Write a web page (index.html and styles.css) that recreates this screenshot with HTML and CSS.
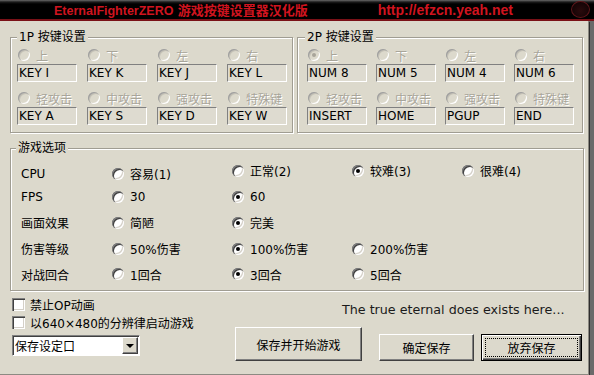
FILE: index.html
```html
<!DOCTYPE html>
<html lang="zh-CN">
<head>
  <meta charset="UTF-8">
  <title>EternalFighterZERO 游戏按键设置器汉化版</title>
  <link rel="stylesheet" href="styles.css">
</head>
<body>
  <div class="window">
    <div class="titlebar">
      <span class="title"><span class="latin">EternalFighterZERO</span> <span class="cjk">游戏按键设置器汉化版</span></span>
      <span class="url">http://efzcn.yeah.net</span>
      <span class="close"></span>
    </div>

    <div class="content">
      <div class="keys">
        <fieldset class="group p1">
          <legend>1P 按键设置</legend>
          <div class="keyrow">
            <div class="cell"><label class="key"><span class="radio"></span>上</label><div class="box">KEY I</div></div>
            <div class="cell"><label class="key"><span class="radio"></span>下</label><div class="box">KEY K</div></div>
            <div class="cell"><label class="key"><span class="radio"></span>左</label><div class="box">KEY J</div></div>
            <div class="cell"><label class="key"><span class="radio"></span>右</label><div class="box">KEY L</div></div>
          </div>
          <div class="keyrow">
            <div class="cell"><label class="key"><span class="radio"></span>轻攻击</label><div class="box">KEY A</div></div>
            <div class="cell"><label class="key"><span class="radio"></span>中攻击</label><div class="box">KEY S</div></div>
            <div class="cell"><label class="key"><span class="radio"></span>强攻击</label><div class="box">KEY D</div></div>
            <div class="cell"><label class="key"><span class="radio"></span>特殊键</label><div class="box">KEY W</div></div>
          </div>
        </fieldset>

        <fieldset class="group p2">
          <legend>2P 按键设置</legend>
          <div class="keyrow">
            <div class="cell"><label class="key"><span class="radio on"></span>上</label><div class="box">NUM 8</div></div>
            <div class="cell"><label class="key"><span class="radio"></span>下</label><div class="box">NUM 5</div></div>
            <div class="cell"><label class="key"><span class="radio"></span>左</label><div class="box">NUM 4</div></div>
            <div class="cell"><label class="key"><span class="radio"></span>右</label><div class="box">NUM 6</div></div>
          </div>
          <div class="keyrow">
            <div class="cell"><label class="key"><span class="radio"></span>轻攻击</label><div class="box">INSERT</div></div>
            <div class="cell"><label class="key"><span class="radio"></span>中攻击</label><div class="box">HOME</div></div>
            <div class="cell"><label class="key"><span class="radio"></span>强攻击</label><div class="box">PGUP</div></div>
            <div class="cell"><label class="key"><span class="radio"></span>特殊键</label><div class="box">END</div></div>
          </div>
        </fieldset>
      </div>

      <fieldset class="group options">
        <legend>游戏选项</legend>
        <div class="optgrid">
          <span class="name">CPU</span>
          <label class="opt"><span class="radio"></span>容易(1)</label>
          <label class="opt up"><span class="radio"></span>正常(2)</label>
          <label class="opt up"><span class="radio on"></span>较难(3)</label>
          <label class="opt up"><span class="radio"></span>很难(4)</label>

          <span class="name">FPS</span>
          <label class="opt"><span class="radio"></span>30</label>
          <label class="opt"><span class="radio on"></span>60</label>

          <span class="name">画面效果</span>
          <label class="opt"><span class="radio"></span>简陋</label>
          <label class="opt"><span class="radio on"></span>完美</label>

          <span class="name">伤害等级</span>
          <label class="opt"><span class="radio"></span>50%伤害</label>
          <label class="opt"><span class="radio on"></span>100%伤害</label>
          <label class="opt"><span class="radio"></span>200%伤害</label>

          <span class="name">对战回合</span>
          <label class="opt"><span class="radio"></span>1回合</label>
          <label class="opt"><span class="radio on"></span>3回合</label>
          <label class="opt"><span class="radio"></span>5回合</label>
        </div>
      </fieldset>

      <div class="bottom">
        <div class="left">
          <label class="check"><span class="checkbox"></span>禁止OP动画</label>
          <label class="check"><span class="checkbox"></span>以640×480的分辨律启动游戏</label>
          <div class="combo">
            <span class="combo-text">保存设定口</span>
            <span class="combo-btn"><span class="arrow"></span></span>
          </div>
        </div>
        <div class="right">
          <div class="motto">The true eternal does exists here...</div>
          <div class="buttons">
            <button class="btn big">保存并开始游戏</button>
            <button class="btn ok">确定保存</button>
            <button class="btn cancel">放弃保存</button>
          </div>
        </div>
      </div>
    </div>
  </div>
</body>
</html>
```

FILE: styles.css
```css
/* base */
* {
  box-sizing: border-box;
}

body {
  margin: 0;
  background: #6a6a6a;
  font-family: "DejaVu Sans", "Noto Sans CJK SC", sans-serif;
  font-size: 12px;
  color: #000;
}

.window {
  width: 594px;
  height: 375px;
  display: flex;
  flex-direction: column;
  background: #6a6a6a;
}

/* title bar */
.titlebar {
  height: 21px;
  flex: none;
  display: flex;
  align-items: center;
  background: linear-gradient(#6a6a6a, #1c1c1c 2px, #000 4px);
  border-bottom: 2px solid #7a1117;
}

.title {
  margin-left: 54px;
  color: #d0141f;
  font-weight: bold;
  white-space: nowrap;
}

.title .latin {
  font-family: "Liberation Sans", sans-serif;
  font-size: 12.5px;
}

.title .cjk {
  font-family: "Noto Sans CJK SC", sans-serif;
  font-size: 13px;
}

.url {
  margin-left: auto;
  margin-right: 58px;
  color: #d0141f;
  font: bold 14px "Liberation Sans", sans-serif;
}

.close {
  width: 19px;
  height: 17px;
  margin-right: 4px;
  border-radius: 50%;
  border: 1px solid #5e161a;
  background: radial-gradient(circle at 50% 60%, #2a0a0c, #0c0203);
}

/* content area */
.content {
  flex: 1;
  width: 589px;
  padding: 9px 0 0 10px;
  background: #dcd9cc;
  border-right: 1px solid #8c8a82;
  border-bottom: 1px solid #8c8a82;
  box-shadow: 1px 1px 0 #2e2e2e;
}

/* etched group boxes */
.group {
  margin: 0;
  min-width: 0;
  border: 1px solid #a09d92;
  box-shadow: inset 1px 1px 0 #fff, 1px 1px 0 #fff;
}

.group legend {
  padding: 0 2px;
  line-height: 14px;
  background: #dcd9cc;
}

.keys {
  display: flex;
  gap: 4px;
}

.p1 {
  width: 283px;
  padding: 3px 4px 7px 6px;
}

.p2 {
  width: 286px;
  padding: 3px 7px 7px 9px;
}

.p2 legend {
  margin-left: -2px;
}

.keyrow {
  display: grid;
  grid-template-columns: repeat(4, 60px);
  column-gap: 10px;
}

.p2 .keyrow {
  column-gap: 9px;
}

.keyrow + .keyrow {
  margin-top: 8px;
}

.cell {
  display: flex;
  flex-direction: column;
  gap: 1px;
}

.key {
  height: 16px;
  display: flex;
  align-items: center;
  gap: 6px;
  padding-left: 1px;
  color: #a8a59a;
  text-shadow: 1px 1px 0 #fff;
  white-space: nowrap;
}

.box {
  height: 18px;
  padding-left: 1px;
  line-height: 16px;
  background: #dedbd0;
  border: 1px solid;
  border-color: #808080 #fff #fff #808080;
  white-space: nowrap;
}

/* radio buttons */
.radio {
  flex: none;
  width: 12px;
  height: 12px;
  display: inline-flex;
  align-items: center;
  justify-content: center;
  border-radius: 50%;
  background: #fff;
  box-shadow: inset 1px 1px 0 #808080, inset 2px 2px 0 #404040, inset -1px -1px 0 #fff, inset -2px -2px 0 #d4d0c8;
}

.key .radio {
  background: #dcd9cc;
  box-shadow: inset 1px 1px 0 #a0a0a0, inset 2px 2px 0 #c4c1b6, inset -1px -1px 0 #fff;
}

.radio.on::after {
  content: "";
  width: 4px;
  height: 4px;
  border-radius: 50%;
  background: #000;
}

.key .radio.on::after {
  background: #a8a59a;
}

/* game options */
.options {
  width: 574px;
  margin-top: 8px;
  padding: 7px 0 3px 10px;
}

.options legend {
  margin-left: -5px;
}

.optgrid {
  display: grid;
  grid-template-columns: 91px 120px 120px 110px 1fr;
  grid-template-rows: 23px 24px 27px 25px 26px;
  align-items: center;
}

.name {
  grid-column: 1;
}

.opt {
  display: flex;
  align-items: center;
  gap: 6px;
  white-space: nowrap;
}

.opt.up {
  margin-bottom: 6px;
}

/* bottom controls */
.bottom {
  display: flex;
  padding-left: 2px;
}

.left {
  width: 223px;
  padding-top: 6px;
  display: flex;
  flex-direction: column;
}

.check {
  height: 14px;
  display: flex;
  align-items: center;
  gap: 5px;
  white-space: nowrap;
}

.check + .check {
  margin-top: 4px;
}

.checkbox {
  flex: none;
  width: 13px;
  height: 13px;
  background: #fff;
  box-shadow: inset 1px 1px 0 #808080, inset 2px 2px 0 #404040, inset -1px -1px 0 #fff, inset -2px -2px 0 #d4d0c8;
}

.combo {
  margin-top: 6px;
  width: 128px;
  height: 21px;
  display: flex;
  align-items: center;
  background: #fff;
  border: 1px solid;
  border-color: #808080 #fff #fff #808080;
  box-shadow: inset 1px 1px 0 #404040;
  padding: 1px 1px 1px 2px;
}

.combo-text {
  flex: 1;
  white-space: nowrap;
}

.combo-btn {
  width: 16px;
  height: 17px;
  display: flex;
  align-items: center;
  justify-content: center;
  background: #dcd9cc;
  border: 1px solid;
  border-color: #fff #404040 #404040 #fff;
  box-shadow: inset -1px -1px 0 #808080;
}

.arrow {
  width: 0;
  height: 0;
  border-top: 4px solid #000;
  border-left: 4px solid transparent;
  border-right: 4px solid transparent;
}

.right {
  flex: 1;
}

.motto {
  height: 16px;
  margin-top: 11px;
  padding-left: 107px;
  font-size: 12.7px;
  line-height: 16px;
  color: #1a1a1a;
  white-space: nowrap;
}

.buttons {
  display: flex;
  align-items: flex-end;
  margin-top: 9px;
}

.btn {
  height: 27px;
  padding: 0;
  background: #dcd9cc;
  font-family: "Noto Sans CJK SC", sans-serif;
  font-size: 12px;
  color: #000;
  border: 1px solid;
  border-color: #fff #404040 #404040 #fff;
  box-shadow: inset -1px -1px 0 #808080;
}

.btn.big {
  width: 127px;
  height: 34px;
}

.btn.ok {
  width: 95px;
  margin-left: 17px;
}

.btn.cancel {
  width: 101px;
  margin-left: 7px;
  border-color: #000;
  box-shadow: inset 1px 1px 0 #fff, inset -1px -1px 0 #404040, inset -2px -2px 0 #808080;
  outline: 1px dotted #000;
  outline-offset: -5px;
}
```
